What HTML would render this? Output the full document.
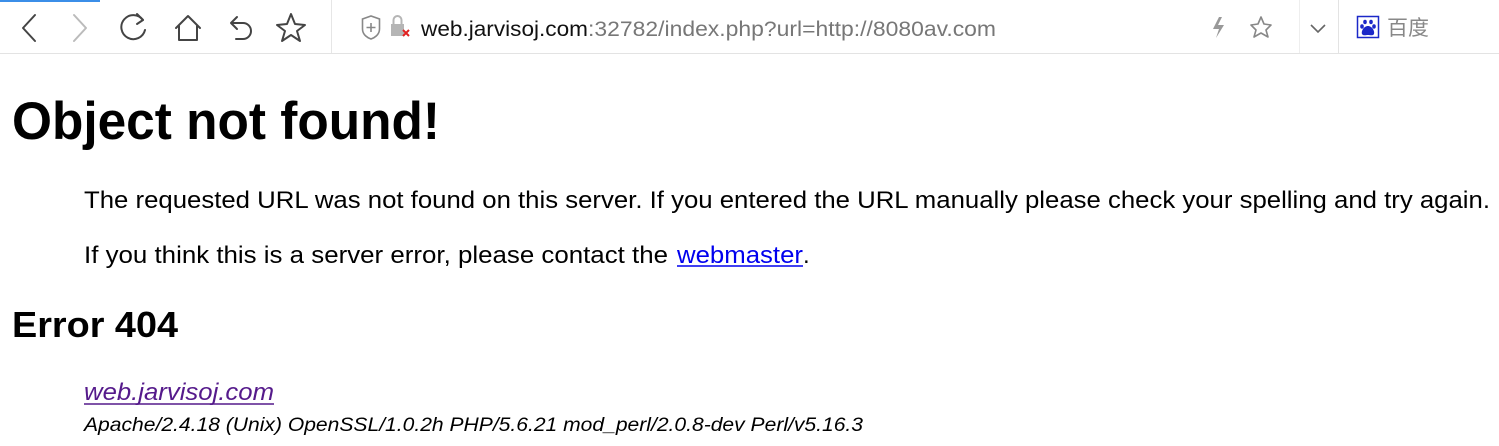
<!DOCTYPE html>
<html><head><meta charset="utf-8"><style>
html,body{margin:0;padding:0;background:#fff;width:1499px;height:446px;overflow:hidden}
svg{display:block}
</style></head><body>
<svg width="1499" height="446" xmlns="http://www.w3.org/2000/svg" font-family="Liberation Sans, sans-serif">
<rect x="0" y="0" width="1499" height="54" fill="#fff"/>
<rect x="0" y="0" width="100" height="2" fill="#3b8ee8"/>
<line x1="0" y1="53.5" x2="1499" y2="53.5" stroke="#e3e3e3"/>
<line x1="331.5" y1="0" x2="331.5" y2="53" stroke="#e6e6e6"/>
<line x1="1299.5" y1="0" x2="1299.5" y2="53" stroke="#eee"/>
<line x1="1338.5" y1="0" x2="1338.5" y2="53" stroke="#e3e3e3"/>
<g fill="none" stroke="#444" stroke-width="2" stroke-linecap="round" stroke-linejoin="round">
<path d="M35 15 L23 28 L35 41"/>
<path d="M74 15 L86 28 L74 41" stroke="#bbb"/>
<path d="M143 20 A12 12 0 1 0 145 30"/><path d="M137 14 L143 20 L137 24"/>
<path d="M176 28 L188 16 L200 28 M179 26 V40 H197 V26"/>
<path d="M237 17 L231 23 L237 29 M231 23 H243 A8 8 0 0 1 243 39 H236"/>
<path d="M291 14 L295 24 L305 25 L297 31 L300 41 L291 35 L282 41 L285 31 L277 25 L287 24 Z"/>
</g>
<path d="M362.5 19 L371 16 L379.5 19 V29 C379.5 35 374 38 371 39 C368 38 362.5 35 362.5 29 Z" fill="none" stroke="#888" stroke-width="1.6"/>
<path d="M371 23 V32 M366.5 27.5 H375.5" stroke="#888" stroke-width="1.6"/>
<rect x="391" y="24" width="13" height="12" fill="#b5b5b5"/>
<path d="M393.5 24 V20 A4 4 0 0 1 401.5 20 V24" fill="none" stroke="#b5b5b5" stroke-width="2"/>
<path d="M403 30 L409 36 M409 30 L403 36" stroke="#e02020" stroke-width="2"/>
<text x="421" y="36" font-size="21" fill="#111" textLength="167" lengthAdjust="spacingAndGlyphs">web.jarvisoj.com</text>
<text x="588" y="36" font-size="21" fill="#777" textLength="408" lengthAdjust="spacingAndGlyphs">:32782/index.php?url=http://8080av.com</text>
<path d="M1219 17 L1213 29 H1219 L1216 38 L1224 25 H1218 L1222 17 Z" fill="#999"/>
<path d="M1261 17 L1264 24 L1271 25 L1266 30 L1268 37 L1261 33 L1254 37 L1256 30 L1251 25 L1258 24 Z" fill="none" stroke="#888" stroke-width="1.6" stroke-linejoin="round"/>
<path d="M1311 25 L1318 32 L1325 25" fill="none" stroke="#666" stroke-width="1.6"/>
<rect x="1357.5" y="16.5" width="21" height="21" fill="#fff" stroke="#1b28c8" stroke-width="1.5"/>
<g fill="#1b28c8"><ellipse cx="1365" cy="22" rx="1.8" ry="2.2"/><ellipse cx="1371" cy="22" rx="1.8" ry="2.2"/><ellipse cx="1362" cy="26.5" rx="1.8" ry="2.2"/><ellipse cx="1374" cy="26.5" rx="1.8" ry="2.2"/><path d="M1368 26 C1364 26 1361 31 1362 34 C1363 36 1366 35 1368 35 C1370 35 1373 36 1374 34 C1375 31 1372 26 1368 26 Z"/></g>
<text x="1387" y="35" font-size="21" fill="#888" font-family="Noto Sans CJK SC, sans-serif">百度</text>

<text x="12" y="139" font-size="53" font-weight="bold" fill="#000" textLength="428" lengthAdjust="spacingAndGlyphs">Object not found!</text>
<text x="84" y="208" font-size="24" fill="#000" textLength="1406" lengthAdjust="spacingAndGlyphs">The requested URL was not found on this server. If you entered the URL manually please check your spelling and try again.</text>
<text x="84" y="263" font-size="24" fill="#000" textLength="584" lengthAdjust="spacingAndGlyphs">If you think this is a server error, please contact the</text>
<text x="677" y="263" font-size="24" fill="#0000ee" textLength="126" lengthAdjust="spacingAndGlyphs">webmaster</text>
<line x1="677" y1="266" x2="803" y2="266" stroke="#0000ee" stroke-width="1.5"/>
<text x="803" y="263" font-size="24" fill="#000">.</text>
<text x="12" y="337" font-size="36" font-weight="bold" fill="#000" textLength="166" lengthAdjust="spacingAndGlyphs">Error 404</text>
<text x="84" y="400" font-size="24" font-style="italic" fill="#551a8b" textLength="190" lengthAdjust="spacingAndGlyphs">web.jarvisoj.com</text>
<line x1="84" y1="404" x2="274" y2="404" stroke="#551a8b" stroke-width="1.5"/>
<text x="84" y="431" font-size="19" font-style="italic" fill="#000" textLength="779" lengthAdjust="spacingAndGlyphs">Apache/2.4.18 (Unix) OpenSSL/1.0.2h PHP/5.6.21 mod_perl/2.0.8-dev Perl/v5.16.3</text>
</svg>
</body></html>
